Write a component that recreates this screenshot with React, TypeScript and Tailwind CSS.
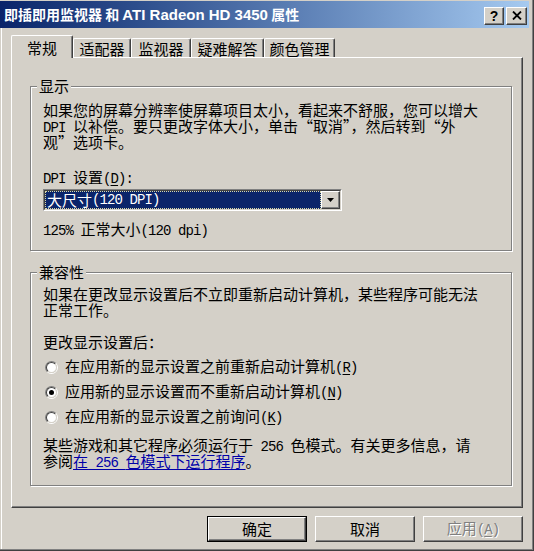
import React from 'react';

type Seg = { t: string; a: boolean; u: boolean };

function Txt({ s }: { s: string }) {
  const segs: Seg[] = [];
  for (let i = 0; i < s.length; i++) {
    let c = s[i];
    let u = false;
    if (c === '&') {
      i++;
      c = s[i];
      u = true;
    }
    const a = c.charCodeAt(0) < 128;
    const last = segs[segs.length - 1];
    if (last && last.a === a && last.u === u) last.t += c;
    else segs.push({ t: c, a, u });
  }
  return (
    <>
      {segs.map((g, i) => (
        <span
          key={i}
          className={
            (g.a
              ? "font-['Liberation_Mono',monospace] text-[14px] tracking-[-0.9px]"
              : "[font-feature-settings:'fwid']") + (g.u ? ' underline underline-offset-[2px]' : '')
          }
        >
          {g.t}
        </span>
      ))}
    </>
  );
}

function Line({ s }: { s: string }) {
  return (
    <div className="whitespace-pre leading-[16px] h-[16px]">
      <Txt s={s} />
    </div>
  );
}

function Radio({ checked, label }: { checked?: boolean; label: string }) {
  return (
    <div className="flex items-center h-[16px] pl-[2px]">
      <div className="w-[13px] h-[13px] rounded-full border border-t-[#808080] border-l-[#808080] border-r-white border-b-white">
        <div className="w-full h-full rounded-full bg-white border border-t-[#404040] border-l-[#404040] border-r-[#D4D0C8] border-b-[#D4D0C8] flex items-center justify-center">
          {checked && <div className="w-[5px] h-[5px] rounded-full bg-black" />}
        </div>
      </div>
      <div className="ml-[7px] whitespace-pre leading-[16px]">
        <Txt s={label} />
      </div>
    </div>
  );
}

function Group({ label, className, children }: { label: string; className: string; children: React.ReactNode }) {
  return (
    <div
      className={
        'relative w-[482px] border border-[#808080] shadow-[inset_1px_1px_0_#fff,1px_1px_0_#fff] pl-[12px] ' + className
      }
    >
      <div className="absolute -top-[9px] left-[6px] px-[2px] bg-[#D4D0C8] leading-[16px] whitespace-pre">
        <Txt s={label} />
      </div>
      {children}
    </div>
  );
}

function Raised({ className, children }: { className: string; children?: React.ReactNode }) {
  return (
    <div
      className={
        'border border-t-white border-l-white border-r-[#404040] border-b-[#404040] shadow-[inset_-1px_-1px_0_#808080] bg-[#D4D0C8] flex items-center justify-center ' +
        className
      }
    >
      {children}
    </div>
  );
}

function Tab({ label, w }: { label: string; w: string }) {
  return (
    <div
      className={
        'h-[19px] border-l border-t border-white border-r border-r-[#404040] shadow-[inset_-1px_0_0_#808080] rounded-t-[2px] flex items-center justify-center pt-[2px] leading-[16px] ' +
        w
      }
    >
      {label}
    </div>
  );
}

export default function App() {
  return (
    <div className="w-[534px] h-[551px] overflow-hidden bg-[#D4D0C8] text-black text-[15px] font-['Noto_Sans_CJK_SC',sans-serif]">
      <div className="w-full h-full border-r border-b border-[#404040]">
        <div className="w-full h-full border-r border-b border-[#808080] pt-[1px] pr-[3px] flex flex-col">
          {/* title bar */}
          <div className="h-[27px] flex items-center bg-linear-to-r from-[#0A246A] to-[#A6CAF0] pl-[4px] pr-[2px]">
            <div className="flex-1 text-white font-bold text-[14px] leading-[16px] whitespace-pre">
              即插即用监视器 和 <span className="font-['Liberation_Sans',sans-serif] text-[15px]">ATI Radeon HD 3450</span> 属性
            </div>
            <div className="flex gap-[2px] mt-[2px]">
              <Raised className="w-[20px] h-[18px]">
                <span className="font-['Liberation_Sans',sans-serif] font-bold text-[14px] leading-[14px]">?</span>
              </Raised>
              <Raised className="w-[21px] h-[18px]">
                <svg width="10" height="9" viewBox="0 0 10 9">
                  <path d="M1 0.5 L9 8.5 M9 0.5 L1 8.5" stroke="#000" strokeWidth="1.8" />
                </svg>
              </Raised>
            </div>
          </div>

          {/* body */}
          <div className="flex-1 ml-[1px] border-l border-white pl-[9px] flex flex-col">
            {/* tabs */}
            <div className="mt-[7px] h-[22px] flex items-end">
              <div className="relative z-10 w-[62px] h-[23px] -mb-[1px] bg-[#D4D0C8] border-l border-t border-white border-r border-r-[#404040] shadow-[inset_-1px_0_0_#808080] rounded-t-[2px] flex items-center justify-center pt-[1px] leading-[16px]">
                常规
              </div>
              <Tab label="适配器" w="w-[58px]" />
              <Tab label="监视器" w="w-[60px]" />
              <Tab label="疑难解答" w="w-[73px]" />
              <Tab label="颜色管理" w="w-[71px]" />
            </div>

            {/* panel */}
            <div className="w-[512px] h-[451px] border-l border-t border-white border-r border-b border-r-[#404040] border-b-[#404040] shadow-[inset_-1px_-1px_0_#808080] pl-[18px] pt-[28px] flex flex-col">
              <Group label="显示" className="h-[165px] pt-[15px]">
                <Line s="如果您的屏幕分辨率使屏幕项目太小，看起来不舒服，您可以增大" />
                <Line s="DPI 以补偿。要只更改字体大小，单击“取消”，然后转到“外" />
                <Line s="观”选项卡。" />
                <div className="mt-[19px]">
                  <Line s="DPI 设置(&D):" />
                </div>
                <div className="mt-[4px] w-[299px] h-[22px] border border-t-[#808080] border-l-[#808080] border-r-white border-b-white">
                  <div className="w-full h-full flex bg-white border border-t-[#404040] border-l-[#404040] border-r-[#D4D0C8] border-b-[#D4D0C8]">
                    <div className="flex-1 bg-[#0A246A] text-white border border-dotted border-[#d8d8a8] flex items-center pl-[1px] leading-[16px] whitespace-pre">
                      <Txt s="大尺寸(120 DPI)" />
                    </div>
                    <Raised className="w-[19px] h-full">
                      <svg width="7" height="4" viewBox="0 0 7 4">
                        <path d="M0 0 H7 L3.5 4 Z" fill="#000" />
                      </svg>
                    </Raised>
                  </div>
                </div>
                <div className="mt-[10px]">
                  <Line s="125% 正常大小(120 dpi)" />
                </div>
              </Group>

              <Group label="兼容性" className="mt-[21px] h-[214px] pt-[13px]">
                <Line s="如果在更改显示设置后不立即重新启动计算机，某些程序可能无法" />
                <Line s="正常工作。" />
                <div className="mt-[16px]">
                  <Line s="更改显示设置后：" />
                </div>
                <div className="mt-[9px] flex flex-col gap-[9px]">
                  <Radio label="在应用新的显示设置之前重新启动计算机(&R)" />
                  <Radio checked label="应用新的显示设置而不重新启动计算机(&N)" />
                  <Radio label="在应用新的显示设置之前询问(&K)" />
                </div>
                <div className="mt-[12px]">
                  <Line s="某些游戏和其它程序必须运行于 256 色模式。有关更多信息，请" />
                  <div className="whitespace-pre leading-[16px] h-[16px]">
                    <Txt s="参阅" />
                    <span className="text-[#0000a8] underline underline-offset-[2px]">
                      <Txt s="在 256 色模式下运行程序" />
                    </span>
                    <Txt s="。" />
                  </div>
                </div>
              </Group>
            </div>

            {/* buttons */}
            <div className="mt-[8px] w-[512px] flex justify-end gap-[8px]">
              <div className="w-[100px] h-[26px] border border-black">
                <Raised className="w-full h-full leading-[16px]">确定</Raised>
              </div>
              <Raised className="w-[100px] h-[26px] leading-[16px]">取消</Raised>
              <Raised className="w-[100px] h-[26px] leading-[16px] text-[#808080] [text-shadow:1px_1px_0_#fff]">
                <span className="whitespace-pre">
                  <Txt s="应用(&A)" />
                </span>
              </Raised>
            </div>
          </div>
        </div>
      </div>
    </div>
  );
}
